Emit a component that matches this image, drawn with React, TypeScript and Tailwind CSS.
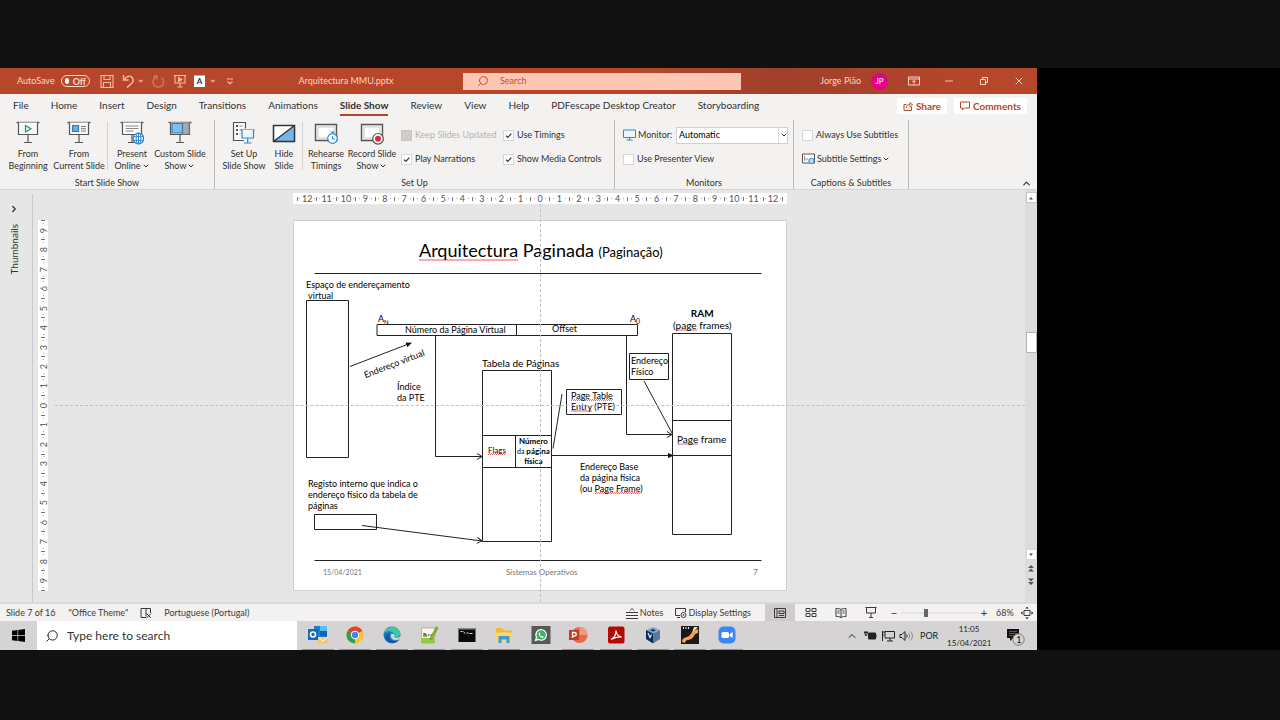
import type { ReactNode } from "react";
import { ChevronDown, ChevronRight, ChevronUp, Minus, Search, X } from "lucide-react";

/* ---------- shared pieces ---------- */

function Check({ label, checked = false, disabled = false }: { label: string; checked?: boolean; disabled?: boolean }) {
  return (
    <label className={`flex h-4 items-center gap-[3px] whitespace-nowrap ${disabled ? "text-[#b5b3b1]" : ""}`}>
      <span className="grid place-items-center">
        <input
          type="checkbox"
          defaultChecked={checked}
          disabled={disabled}
          className="peer col-start-1 row-start-1 size-[11px] appearance-none border border-[#d8d6d4] bg-white disabled:border-[#c8c6c4] disabled:bg-[#cfcdcb]"
        />
        <svg viewBox="0 0 10 10" className="pointer-events-none invisible col-start-1 row-start-1 size-[9px] peer-checked:visible">
          <path d="M2 5.2 4.2 7.2 8.2 2.8" fill="none" stroke="#333" strokeWidth="1.3" />
        </svg>
      </span>
      {label}
    </label>
  );
}

function BigButton({ icon, lines, menu = false, width }: { icon: ReactNode; lines: [string, string]; menu?: boolean; width: string }) {
  return (
    <button type="button" className={`flex shrink-0 flex-col items-center pt-px leading-3 whitespace-nowrap ${width}`}>
      <svg viewBox="0 0 24 24" className="mb-[3px] size-6" fill="none" stroke="#555" strokeWidth="1.2">
        {icon}
      </svg>
      <span>{lines[0]}</span>
      <span className="flex items-center">
        {lines[1]}
        {menu && <ChevronDown className="ml-px size-2" strokeWidth={3} />}
      </span>
    </button>
  );
}

function Group({ name, width, children }: { name: string; width: string; children: ReactNode }) {
  return (
    <section aria-label={name} className={`flex shrink-0 flex-col justify-between border-r border-[#bdbbb9] ${width}`}>
      <div className="flex">{children}</div>
      <h2 className="text-center leading-3">{name}</h2>
    </section>
  );
}

const Divider = () => <span className="mx-[2px] mt-0.5 h-12 w-px shrink-0 bg-[#d5d3d1]" />;

/* ---------- ribbon drawings ---------- */

const screen = (
  <>
    <path d="M0.5 1.5h23" strokeWidth="1.4" />
    <path d="M2.5 1.5v12h19v-12" fill="#fafafa" />
    <path d="M12 13.5v8M8 21.5h8" />
  </>
);

const icons = {
  begin: (
    <>
      {screen}
      <path d="M9.5 4.5v6.5l5.5-3.2z" stroke="#2c9465" fill="#e3f2eb" />
    </>
  ),
  current: (
    <>
      {screen}
      <path d="M5.500 4.500h6v6h-6z" fill="#66aee4" stroke="#2b7bbf" />
      <path d="M14 5.500h5M14 7.700h5M14 10h5" stroke="#777" strokeWidth="1" />
    </>
  ),
  online: (
    <>
      {screen}
      <path d="M5.500 5h13M5.500 7.500h13M5.500 10h8" stroke="#888" strokeWidth="1" />
      <circle cx="18.500" cy="17.500" r="5.300" fill="#fff" stroke="#2b88d0" />
      <ellipse cx="18.500" cy="17.500" rx="2.300" ry="5.300" stroke="#2b88d0" strokeWidth="1" />
      <path d="M13.500 15.700h10M13.500 19.300h10M18.500 12.200v10.600" stroke="#2b88d0" strokeWidth="1" />
    </>
  ),
  custom: (
    <>
      {screen}
      <path d="M14 2h7v11h-7z" fill="#aaa" stroke="#888" />
      <path d="M4 2.500h10.500v9.500H4z" fill="#83beec" stroke="#2b7bbf" />
    </>
  ),
  setup: (
    <>
      <path d="M12 19.500H1.500v-18h12v6" fill="#fafafa" />
      <path d="M4 5h2M4 9h2M4 13h2" strokeWidth="1.800" />
      <path d="M7.500 5h3.500M7.500 9h2M7.500 13h1" strokeWidth="1" stroke="#999" />
      <path d="M8.500 9h14" stroke="#2b88d0" />
      <path d="M10 9v8h11.500V9" fill="#eef6fc" stroke="#2b88d0" />
      <path d="M15.700 17v5M12 22h7.500" stroke="#2b88d0" />
    </>
  ),
  hide: (
    <>
      <path d="M1.500 4.500h21v16h-21z" fill="#fff" />
      <path d="M22.500 4.500v16h-21z" fill="#74b6e9" stroke="none" />
      <path d="M1.500 20.500 22.500 4.500M1.500 4.500h21v16h-21z" strokeWidth="1.400" stroke="#333" />
    </>
  ),
  rehearse: (
    <>
      <path d="M1.500 3.500h21v16h-21z" strokeWidth="1.400" />
      <path d="M4 6h16v11H4z" fill="#fff" stroke="#ccc" strokeWidth="1" />
      <circle cx="18.500" cy="17.500" r="4.800" fill="#fff" stroke="#2b88d0" />
      <path d="M16.500 11h4M18.500 11v2M18.500 15v3h2.500M22 12.500l1.200 1.200" stroke="#2b88d0" strokeWidth="1" />
    </>
  ),
  record: (
    <>
      <path d="M1.500 3.500h21v16h-21z" strokeWidth="1.400" />
      <path d="M4 6h16v11H4z" fill="#fff" stroke="#ccc" strokeWidth="1" />
      <circle cx="18" cy="17.800" r="5.300" fill="#fff" stroke="#555" />
      <circle cx="18" cy="17.800" r="3" fill="#e0283c" stroke="none" />
    </>
  ),
};

/* ---------- title bar ---------- */

function TitleBar() {
  return (
    <header className="flex h-[26px] shrink-0 items-center bg-linear-to-r from-[#b7472a] from-60% via-[#a0402a] via-75% to-[#b7472a] to-95% pr-3 pl-[17px] text-[9px] text-[#ffd3c4]">
      <div className="flex w-[230px] items-center">
        <span className="w-[39px]">AutoSave</span>
        <button type="button" className="ml-[5px] flex h-3 w-[29px] items-center gap-1 rounded-full border border-[#ffd3c4] px-[3px] leading-none font-bold">
          <span className="size-[6px] rounded-full bg-white" />
          Off
        </button>
        <svg viewBox="0 0 140 14" className="ml-[10px] h-[14px] w-[140px] shrink-0" fill="none" stroke="#ffb9a2" strokeWidth="1.100">
          <path d="M1 1.500h12v12H1zM4 1.500v4h6v-4M3.500 13.500v-5h7v5" />
          <path d="M23.500 1v5h5M24 6c2-4 6-5 8-2.500s1 5-1 6.500l-4 3.500" strokeWidth="1.400" />
          <path d="M39 6l1.800 1.800L42.600 6" />
          <path d="M61.500 3.500a5.300 5.300 0 1 1-5.500-.5M53.500 2h3.500v3.500" stroke="#d07a60" strokeWidth="1.400" />
          <path d="M74 1.500h12M75 1.500v7.500h10V1.500M80 9v4M77.500 13h5" />
          <path d="M78.500 3.500v4l3.500-2z" fill="#ffb9a2" />
          <path d="M94 1.500h11V13H94z" fill="#fff" stroke="none" />
          <path d="M111 6l1.800 1.800L114.600 6" />
          <path d="M127 5h6M127.500 7.500l2.500 2.200 2.500-2.200" />
          <text x="96.800" y="10.300" fontSize="8" fontWeight="bold" fill="#333" stroke="none">A</text>
        </svg>
      </div>
      <h1 className="w-[198px] text-center whitespace-nowrap">Arquitectura MMU.pptx</h1>
      <label className="ml-[18px] flex h-[17px] w-[278px] items-center gap-[11px] bg-[#ffc7b3] px-[14px] text-[#b7472a]">
        <Search className="size-3 -scale-x-100" strokeWidth={1.800} />
        <input aria-label="Search" placeholder="Search" className="w-40 outline-none placeholder:text-[#b5563c]" />
      </label>
      <div className="ml-auto flex items-center">
        <span>Jorge Pião</span>
        <span className="ml-[10px] grid size-[17px] place-items-center rounded-full bg-[#e3008c] text-[8px] text-white">JP</span>
        <button type="button" aria-label="Ribbon display options" className="ml-[20px]">
          <svg viewBox="0 0 12 12" className="size-3" fill="none" stroke="currentColor">
            <path d="M.5 2h11v8H.500zM.500 4h11M6 9V5.500M4.300 7 6 5.300 7.700 7" />
          </svg>
        </button>
        <button type="button" aria-label="Minimize" className="ml-[23px]"><Minus className="size-3" strokeWidth={1.800} /></button>
        <button type="button" aria-label="Restore" className="ml-[23px]">
          <svg viewBox="0 0 12 12" className="size-3" fill="none" stroke="currentColor">
            <path d="M2.500 4.500h5v5h-5zM4.500 4.500v-2h5v5h-2" />
          </svg>
        </button>
        <button type="button" aria-label="Close" className="ml-[23px]"><X className="size-3" strokeWidth={2} /></button>
      </div>
    </header>
  );
}

/* ---------- tabs ---------- */

const tabs = ["File", "Home", "Insert", "Design", "Transitions", "Animations", "Slide Show", "Review", "View", "Help", "PDFescape Desktop Creator", "Storyboarding"];

function Tabs() {
  return (
    <nav className="flex h-6 shrink-0 items-center justify-between pr-[10px] pl-[13px] text-[10px]">
      <div className="flex gap-[22px]">
        {tabs.map((t) => (
          <a
            key={t}
            href="#"
            className={`border-b-2 leading-[18px] whitespace-nowrap ${t === "Slide Show" ? "border-[#b7472a] font-bold" : "border-transparent"}`}
          >
            {t}
          </a>
        ))}
      </div>
      <div className="flex gap-[7px] font-bold text-[#b7472a]">
        <button type="button" className="flex h-4 items-center gap-[3px] bg-white px-[6px]">
          <svg viewBox="0 0 10 10" className="size-[10px]" fill="none" stroke="currentColor">
            <path d="M3.500 3.500H1v6h7.500V6M3 7c.3-2.500 2-3.500 4-3.500V1.500L9.500 4 7 6.200V4.500" />
          </svg>
          Share
        </button>
        <button type="button" className="flex h-4 items-center gap-[3px] bg-white px-[6px]">
          <svg viewBox="0 0 10 10" className="size-[10px]" fill="none" stroke="currentColor">
            <path d="M.500 1h9v6H4.500L2.500 9V7h-2z" />
          </svg>
          Comments
        </button>
      </div>
    </nav>
  );
}

/* ---------- ribbon ---------- */

function Ribbon() {
  return (
    <div className="flex h-[72px] shrink-0 border-b border-[#d6d4d2] pt-[2px] text-[9px]">
      <Group name="Start Slide Show" width="w-[215px]">
        <span className="w-[3px] shrink-0" />
        <BigButton icon={icons.begin} lines={["From", "Beginning"]} width="w-[50px]" />
        <BigButton icon={icons.current} lines={["From", "Current Slide"]} width="w-[52px]" />
        <Divider />
        <BigButton icon={icons.online} lines={["Present", "Online"]} menu width="w-[44px]" />
        <BigButton icon={icons.custom} lines={["Custom Slide", "Show"]} menu width="w-[52px]" />
      </Group>
      <Group name="Set Up" width="w-[400px]">
        <span className="w-[5px] shrink-0" />
        <BigButton icon={icons.setup} lines={["Set Up", "Slide Show"]} width="w-[48px]" />
        <BigButton icon={icons.hide} lines={["Hide", "Slide"]} width="w-[32px]" />
        <Divider />
        <BigButton icon={icons.rehearse} lines={["Rehearse", "Timings"]} width="w-[42px]" />
        <BigButton icon={icons.record} lines={["Record Slide", "Show"]} menu width="w-[50px]" />
        <div className="ml-1 flex w-[102px] shrink-0 flex-col gap-2 pt-[7px]">
          <Check label="Keep Slides Updated" disabled />
          <Check label="Play Narrations" checked />
        </div>
        <div className="flex flex-col gap-2 pt-[7px]">
          <Check label="Use Timings" checked />
          <Check label="Show Media Controls" checked />
        </div>
      </Group>
      <Group name="Monitors" width="w-[179px]">
        <div className="flex w-full flex-col gap-2 pt-[7px] pr-[5px] pl-2">
          <div className="flex h-4 items-center">
            <svg viewBox="0 0 13 12" className="mr-[2px] h-3 w-[13px]" fill="#eef6fc" stroke="#2b88d0">
              <path d="M.500 1h12v7.500H.500zM6.500 8.500V11M3.500 11h6" />
            </svg>
            <label htmlFor="monitor">Monitor:</label>
            <span className="ml-auto grid w-[112px] items-center">
              <select id="monitor" className="col-start-1 row-start-1 h-[17px] appearance-none border border-[#d2d0ce] bg-white pl-[2px] text-black">
                <option>Automatic</option>
              </select>
              <span className="pointer-events-none col-start-1 row-start-1 grid h-[15px] w-[10px] place-items-center justify-self-end border-l border-[#e0e0e0]">
                <ChevronDown className="size-2" strokeWidth={3} />
              </span>
            </span>
          </div>
          <Check label="Use Presenter View" />
        </div>
      </Group>
      <Group name="Captions & Subtitles" width="w-[115px]">
        <div className="flex flex-col gap-2 pt-[7px] pl-2">
          <Check label="Always Use Subtitles" />
          <button type="button" className="flex h-4 items-center whitespace-nowrap">
            <svg viewBox="0 0 13 12" className="mr-[2px] h-3 w-[13px]" fill="#fff" stroke="#555">
              <path d="M.500 1h12v9H.500z" />
              <path d="M2.500 3v5M2.500 6h4" stroke="#999" />
              <circle cx="9.500" cy="8" r="2.700" stroke="#2b88d0" fill="#b9dcf5" />
            </svg>
            Subtitle Settings
            <ChevronDown className="ml-px size-2" strokeWidth={3} />
          </button>
        </div>
      </Group>
      <button type="button" aria-label="Collapse the ribbon" className="mr-[5px] ml-auto self-end">
        <ChevronUp className="size-[11px]" strokeWidth={2.500} />
      </button>
    </div>
  );
}

/* ---------- rulers ---------- */

function scale(max: number) {
  return Array.from({ length: 2 * max + 1 }, (_, i) => Math.abs(i - max));
}

function HorizontalRuler() {
  return (
    <div className="flex h-[11px] w-[494px] items-center bg-white px-1 text-[9px] leading-none text-[#555]">
      <span className="h-1 w-px bg-[#777]" />
      {scale(12).map((n, i) => (
        <span key={i} className="flex flex-1 items-center justify-between">
          <span />
          <span className="size-px bg-[#aaa]" />
          <span>{n}</span>
          <span className="size-px bg-[#aaa]" />
          <span className="h-1 w-px bg-[#777]" />
        </span>
      ))}
    </div>
  );
}

function VerticalRuler() {
  return (
    <div className="flex h-[371px] w-[10px] flex-col items-center bg-white text-[9px] leading-none text-[#555]">
      <span className="h-px w-1 bg-[#777]" />
      {scale(9).map((n, i) => (
        <span key={i} className="flex flex-1 flex-col items-center justify-between">
          <span />
          <span className="size-px bg-[#aaa]" />
          <span className="grid size-[9px] -rotate-90 place-items-center">{n}</span>
          <span className="size-px bg-[#aaa]" />
          <span className="h-px w-1 bg-[#777]" />
        </span>
      ))}
    </div>
  );
}

/* ---------- slide ---------- */

const Typo = ({ children }: { children: ReactNode }) => (
  <span className="bg-[conic-gradient(#e8606a_25%,transparent_0_50%,#e8606a_0_75%,transparent_0)] bg-[length:2px_2px] bg-bottom bg-repeat-x">{children}</span>
);

function Label({ at, children }: { at: string; children: ReactNode }) {
  return <p className={`absolute whitespace-nowrap ${at}`}>{children}</p>;
}

function Slide() {
  return (
    <article className="relative h-[371px] w-[494px] shrink-0 border border-[#d0d0d0] bg-white text-[9px] leading-[11px] text-black">
      <svg viewBox="294 221 492 369" className="absolute inset-0 size-full" fill="none" stroke="#222" strokeWidth="1">
        <defs>
          <marker id="solid" markerWidth="6" markerHeight="6" refX="5" refY="3" orient="auto">
            <path d="M0 .500 6 3 0 5.500z" fill="#111" stroke="none" />
          </marker>
          <marker id="open" markerWidth="7" markerHeight="8" refX="6" refY="4" orient="auto">
            <path d="M1 1 6 4 1 7" fill="none" stroke="#222" />
          </marker>
        </defs>
        <path d="M314.500 273.500h447M314.500 560.500h447" strokeWidth="1.200" />
        <path d="M306.500 300.500h42v157h-42z" />
        <path d="M377 324.500h260.500v11H377zM516.500 324.500v11" />
        <path d="M350 366.500 411 343" markerEnd="url(#solid)" />
        <path d="M435.500 335.500v121H482" markerEnd="url(#open)" />
        <path d="M482.500 370.500h69v171h-69zM482.500 435.500h69M482.500 467.500h69M515.500 435.500v32" />
        <path d="M314.500 514.500h62v15h-62z" />
        <path d="M362 525.500 482 541" markerEnd="url(#open)" />
        <path d="M626.500 335.500v99H672" markerEnd="url(#open)" />
        <path d="M551.500 455.500H673" markerEnd="url(#solid)" />
        <path d="M553 448.500 562 394" />
        <path d="M566.500 389.500h55v25h-55zM629.500 353.500h39v26h-39z" />
        <path d="M644 381 672 433" />
        <path d="M672.500 333.500h59v201h-59zM672.500 420.500h59M672.500 455.500h59" />
      </svg>
      <h2 className="absolute top-[17px] left-[125px] text-[18px] leading-6 whitespace-nowrap">
        <Typo>Arquitectura</Typo> Paginada <span className="text-[13px]">(Paginação)</span>
      </h2>
      <Label at="top-[58px] left-3">Espaço de endereçamento<br />&nbsp;virtual</Label>
      <Label at="top-[92px] left-[84px]">A<sub className="text-[6px]">N</sub></Label>
      <Label at="top-[92px] left-[336px]">A<sub>0</sub></Label>
      <Label at="top-[103px] left-[111px]">Número da Página Virtual</Label>
      <Label at="top-[102px] left-[258px]">Offset</Label>
      <Label at="top-[137px] left-[68px] -rotate-[21deg]">Endereço virtual</Label>
      <Label at="top-[160px] left-[103px]">Índice<br />da PTE</Label>
      <Label at="top-[137px] left-[188px] text-[10px]">Tabela de Páginas</Label>
      <Label at="top-[134px] left-[337px]">Endereço<br />Físico</Label>
      <Label at="top-[169px] left-[277px]"><Typo>Page Table</Typo><br /><Typo>Entry</Typo> (PTE)</Label>
      <Label at="top-[86px] left-[379px] text-center text-[10px] leading-3"><b>RAM</b><br />(<Typo>page</Typo> frames)</Label>
      <Label at="top-[213px] left-[383px] text-[10px]"><Typo>Page</Typo> frame</Label>
      <Label at="top-[224px] left-[194px] text-[8px]"><Typo>Flags</Typo></Label>
      <Label at="top-[215px] left-[223px] text-center text-[8px] leading-[10px] font-bold">Número<br /><span className="text-[7px] font-normal">da</span> página<br />física</Label>
      <Label at="top-[240px] left-[286px]">Endereço Base<br />da página física<br />(ou <Typo>Page Frame</Typo>)</Label>
      <Label at="top-[257px] left-[14px]">Registo interno que indica o<br />endereço físico da tabela de<br />páginas</Label>
      <Label at="top-[346px] left-[29px] text-[7px] text-[#777]">15/04/2021</Label>
      <Label at="top-[346px] left-[212px] text-[8px] text-[#777]">Sistemas Operativos</Label>
      <Label at="top-[346px] left-[459px] text-[8px] text-[#777]">7</Label>
    </article>
  );
}

function Workspace() {
  return (
    <main className="flex flex-1 bg-[#e6e6e6]">
      <aside className="mt-1 flex w-[33px] shrink-0 flex-col items-center gap-[10px] border-r border-[#c9c9c9] pt-[10px] pr-1 text-[10px]">
        <ChevronRight className="size-[10px]" strokeWidth={3} />
        <span className="rotate-180 [writing-mode:vertical-rl]">Thumbnails</span>
      </aside>
      <div className="w-[22px] shrink-0 pt-[30px] pl-[5px]">
        <VerticalRuler />
      </div>
      <div className="relative flex flex-1 flex-col items-center pt-[3px] pb-[11px]">
        <HorizontalRuler />
        <div className="mt-4 flex">
          <Slide />
        </div>
        <span className="absolute top-[215px] right-0 left-0 border-t border-dashed border-[#c0c0c0]" />
        <span className="absolute top-[14px] bottom-0 left-1/2 border-l border-dashed border-[#c0c0c0]" />
      </div>
      <div className="flex w-3 shrink-0 flex-col items-center bg-[#dcdcdc] pt-[2px] pb-4 text-[#555]">
        <button type="button" aria-label="Scroll up" className="grid size-[11px] place-items-center border border-[#c6c6c6] bg-white">
          <svg viewBox="0 0 6 6" className="size-[6px]"><path d="M1 4.500h4L3 2z" fill="currentColor" /></svg>
        </button>
        <span className="mt-[129px] h-[21px] w-[11px] border border-[#b5b5b5] bg-white" />
        <button type="button" aria-label="Scroll down" className="mt-auto grid size-[11px] place-items-center border border-[#d6d6d6] bg-white">
          <svg viewBox="0 0 6 6" className="size-[6px]"><path d="M1 1.500h4L3 4z" fill="currentColor" /></svg>
        </button>
        <button type="button" aria-label="Previous slide" className="mt-1">
          <svg viewBox="0 0 6 8" className="h-2 w-[6px]"><path d="M0 4h6L3 1zM0 7.500h6L3 4.500z" fill="currentColor" /></svg>
        </button>
        <button type="button" aria-label="Next slide" className="mt-[6px]">
          <svg viewBox="0 0 6 8" className="h-2 w-[6px]"><path d="M0 .500h6L3 3.500zM0 4h6L3 7z" fill="currentColor" /></svg>
        </button>
      </div>
    </main>
  );
}

/* ---------- status bar ---------- */

function StatusBar() {
  return (
    <div className="flex h-[19px] shrink-0 items-center border-t-2 border-[#dadada] bg-[#f3f2f1] pl-[6px] text-[9px] text-[#3b3a39]">
      <span>Slide 7 of 16</span>
      <span className="ml-[13px]">"Office Theme"</span>
      <svg viewBox="0 0 12 12" className="ml-3 size-3" fill="none" stroke="currentColor">
        <path d="M6 1.500H1v9h5M6 1.500v8M6 1.500h4.500V6M6.500 6.500l4.500 4.500M11 6.500 6.500 11" />
      </svg>
      <span className="ml-3">Portuguese (Portugal)</span>
      <div className="ml-auto flex items-center">
        <button type="button" className="flex items-center gap-[2px]">
          <svg viewBox="0 0 12 12" className="size-3" fill="none" stroke="currentColor">
            <path d="M0 5.500h12M0 8.500h12M0 11.500h12M4 3.500l2-2 2 2" />
          </svg>
          Notes
        </button>
        <button type="button" className="ml-3 flex items-center gap-px">
          <svg viewBox="0 0 12 12" className="size-3" fill="none" stroke="currentColor">
            <path d="M5 8.500H.500v-7h10V5M2 10.500h3" />
            <circle cx="8.500" cy="8" r="2.500" />
            <circle cx="8.500" cy="8" r=".500" />
          </svg>
          Display Settings
        </button>
        <button type="button" aria-label="Normal" className="ml-[14px] grid h-[17px] w-[30px] place-items-center bg-[#cfcdcb]">
          <svg viewBox="0 0 12 10" className="h-[10px] w-3" fill="none" stroke="currentColor">
            <path d="M.500.500h11v9H.500zM3 .500v9M5 3h5v2.500H5zM5 7.500h5" />
          </svg>
        </button>
        <button type="button" aria-label="Slide sorter" className="grid w-[31px] place-items-center">
          <svg viewBox="0 0 12 10" className="h-[10px] w-3" fill="none" stroke="currentColor">
            <path d="M1 .500h4v3H1zM7 .500h4v3H7zM1 5.500h4v3H1zM7 5.500h4v3H7z" />
          </svg>
        </button>
        <button type="button" aria-label="Reading view" className="grid w-[30px] place-items-center">
          <svg viewBox="0 0 12 10" className="h-[10px] w-3" fill="none" stroke="currentColor">
            <path d="M6 1.500C4.500.500 3 .500 1 .500v8c2 0 3.500 0 5 1 1.500-1 3-1 5-1v-8c-2 0-3.500 0-5 1zM6 1.500v8M2.500 3h2M2.500 5h2M7.500 3h2M7.500 5h2" />
          </svg>
        </button>
        <button type="button" aria-label="Slide show" className="grid w-[30px] place-items-center">
          <svg viewBox="0 0 12 11" className="h-[11px] w-3" fill="none" stroke="currentColor">
            <path d="M.500.500h11M1.500.500v5.500h9V.500M6 6v4M4 10.500h4" />
          </svg>
        </button>
        <button type="button" aria-label="Zoom out" className="ml-1 w-2 text-[12px] leading-none">−</button>
        <input
          type="range"
          aria-label="Zoom"
          defaultValue={32}
          className="mx-[3px] h-3 w-[76px] appearance-none bg-linear-to-b from-transparent from-45% via-[#999] via-50% to-transparent to-55% [&::-webkit-slider-thumb]:h-2 [&::-webkit-slider-thumb]:w-1 [&::-webkit-slider-thumb]:appearance-none [&::-webkit-slider-thumb]:bg-[#666]"
        />
        <button type="button" aria-label="Zoom in" className="w-2 text-[12px] leading-none">+</button>
        <span className="ml-2 w-[25px]">68%</span>
        <button type="button" aria-label="Fit slide to window" className="mr-1">
          <svg viewBox="0 0 12 12" className="size-3" fill="none" stroke="currentColor">
            <path d="M3 3.500h6v5H3zM6 0v2M6 10v2M0 6h2M10 6h2M4.700 1.500 6 .300 7.300 1.500M4.700 10.500 6 11.700 7.300 10.500M1.500 4.700.300 6l1.200 1.300M10.500 4.700 11.700 6l-1.200 1.300" />
          </svg>
        </button>
      </div>
    </div>
  );
}

/* ---------- taskbar ---------- */

const apps: { name: string; open?: boolean; art: ReactNode }[] = [
  {
    name: "Outlook",
    open: true,
    art: (
      <>
        <path d="M6 1h13v13H6z" fill="#1a7fd4" />
        <path d="M12 1h7v5h-7z" fill="#4fc3f2" />
        <path d="M12 6h7v5h-7z" fill="#1461b0" />
        <path d="M0 4h10v11H0z" fill="#0f6cbd" />
        <circle cx="5" cy="9.500" r="2.500" fill="none" stroke="#fff" strokeWidth="1.500" />
        <path d="M10 12h10v7H10z" fill="#f5c97a" />
        <path d="m10 12 5 4 5-4" fill="none" stroke="#fff1d6" />
      </>
    ),
  },
  {
    name: "Chrome",
    open: true,
    art: (
      <>
        <circle cx="10" cy="10" r="8.500" fill="#f9c22e" />
        <path d="M10 10 2.640 5.750A8.500 8.500 0 0 1 17.360 5.750z" fill="#e04335" />
        <path d="M2.640 5.750 10 10 10 18.500A8.500 8.500 0 0 1 2.640 5.750z" fill="#2f9e4f" />
        <circle cx="10" cy="10" r="4.200" fill="#fff" />
        <circle cx="10" cy="10" r="3.200" fill="#4285f4" />
      </>
    ),
  },
  {
    name: "Edge",
    open: true,
    art: (
      <>
        <circle cx="10" cy="10" r="8.500" fill="#1b76c9" />
        <path d="M2 8C4 1 15-.500 18 7c1 4-2 6-6 5 2-4-4-8-10-4z" fill="#3fc8a8" />
        <path d="M8 9c-2 4 1 9 9 6-3 4-10 4-13 0-2-4 1-7 4-6z" fill="#155a9e" />
        <path d="M9 9c3-1 4 1 3 3 2 1 5 1 6.500-1 0 3-3 5-6.500 4-3-1-4-4-3-6z" fill="#d5d3d1" />
      </>
    ),
  },
  {
    name: "Notepad++",
    open: true,
    art: (
      <>
        <path d="M2.500 3h13v15h-13z" fill="#f7f7e8" stroke="#999" strokeWidth=".600" />
        <path d="M2.500 13h13v5h-13z" fill="#8ccf3c" />
        <path d="M5 8v4M5 9h2v3M8.500 10h2M11.500 10h2" stroke="#333" fill="none" />
        <path d="M17.500 1.500 11.500 12l-.300 3 2.500-1.500L19 3z" fill="#8ab82c" stroke="#66751f" strokeWidth=".500" />
      </>
    ),
  },
  {
    name: "Command Prompt",
    open: true,
    art: (
      <>
        <path d="M1.500 3h17v14h-17z" fill="#0a0a0a" />
        <path d="M1.500 3h17v1.500h-17z" fill="#888" />
        <path d="M3.500 6.500h2M6.500 6.500l1.500 2M9.500 8h2M12.500 8.500h3" stroke="#ddd" />
      </>
    ),
  },
  {
    name: "File Explorer",
    open: true,
    art: (
      <>
        <path d="M2 3h6l2 2.500h8V17H2z" fill="#f0b93a" />
        <path d="M2 7.500h16V17H2z" fill="#fbd872" />
        <path d="M4.500 11h11v7h-3v-3.500h-5V18h-3z" fill="#3d9bdc" />
      </>
    ),
  },
  {
    name: "WhatsApp",
    art: (
      <>
        <path d="M.500 1h19v18H.500z" fill="#585858" />
        <path d="M4.500 15.500 5.500 12.500a5.300 5.300 0 1 1 2 2z" fill="#35b565" stroke="#fff" strokeWidth="1.200" />
        <path d="M7.500 8.500c.500 2.500 2 4 4.500 4.500l.800-1.300-1.500-.900-.800.700c-.800-.500-1.200-1-1.600-1.700l.700-.800-.700-1.500z" fill="#fff" />
      </>
    ),
  },
  {
    name: "PowerPoint",
    open: true,
    art: (
      <>
        <circle cx="11.500" cy="10" r="8" fill="#e2694a" />
        <path d="M11.500 2a8 8 0 0 1 8 8h-8z" fill="#f4997e" />
        <path d="M1 5h10v10H1z" fill="#c33e1f" />
        <path d="M4.500 13V7.500h2a1.700 1.700 0 0 1 0 3.500h-2" fill="none" stroke="#fff" strokeWidth="1.300" />
      </>
    ),
  },
  {
    name: "Acrobat Reader",
    open: true,
    art: (
      <>
        <rect x="2" y="1.500" width="16.500" height="17" rx="2" fill="#b30b00" />
        <path d="M5 14.500c3-1.500 5-5.500 5-9 .500 4 2 6 5.500 6.500-3.500-.500-7 .500-10.500 2.500z" fill="none" stroke="#fff" strokeWidth="1.300" />
      </>
    ),
  },
  {
    name: "VirtualBox",
    open: true,
    art: (
      <>
        <path d="m3 5 7-3 7 3-7 3.500z" fill="#89a9cc" />
        <path d="M3 5v9l7 4.500V8.500z" fill="#0d2c57" />
        <path d="M17 5v9l-7 4.500V8.500z" fill="#5579a3" />
        <path d="m5 8 2 4.500 1.500-3" fill="none" stroke="#e4eef8" strokeWidth="1.200" />
        <path d="m10 4 3 1.200-3 1.300-3-1.300z" fill="#12386a" />
      </>
    ),
  },
  {
    name: "PuTTY",
    open: true,
    art: (
      <>
        <path d="M1 1h18v18H1z" fill="#1c1a18" />
        <path d="M3 3h1M5.500 3h1M8 3h1" stroke="#eee" strokeWidth="2" />
        <path d="M2 17c0-5 4-4 7-6s2-5 9-7v4c-5 1-3 4-7 6s-5 0-6 4z" fill="#f5a54a" />
        <path d="M14 2h4l-6 6z" fill="#fbe0b0" />
      </>
    ),
  },
  {
    name: "Zoom",
    open: true,
    art: (
      <>
        <rect x="1.500" y="1.500" width="17" height="17" rx="5" fill="#3d86f7" />
        <rect x="4.500" y="7" width="7.500" height="6" rx="1.500" fill="#fff" />
        <path d="m12.700 9 3-2v6l-3-2z" fill="#fff" />
      </>
    ),
  },
];

function Taskbar() {
  return (
    <footer className="flex h-[29px] shrink-0 items-stretch bg-[#d5d3d3] text-[#222]">
      <button type="button" aria-label="Start" className="grid w-[37px] place-items-center">
        <svg viewBox="0 0 13 13" className="size-[13px]">
          <path d="M0 1.800 5.500 1v5.200H0zM6.200.900 13 0v6.200H6.200zM0 6.900h5.500V12L0 11.200zM6.200 6.900H13V13l-6.800-.900z" />
        </svg>
      </button>
      <label className="flex w-[260px] items-center gap-2 bg-white pl-2">
        <Search className="size-[14px] -scale-x-100" strokeWidth={1.700} />
        <input aria-label="Type here to search" placeholder="Type here to search" className="w-40 text-[12px] outline-none placeholder:text-[#333]" />
      </label>
      <div className="ml-[2px] flex w-[447px]">
        {apps.map((a) => (
          <button key={a.name} type="button" aria-label={a.name} className="flex flex-1 flex-col items-center justify-between pt-1">
            <svg viewBox="0 0 20 20" className="size-5">{a.art}</svg>
            {a.open && <span className="h-px w-8 bg-[#8b95a0]" />}
          </button>
        ))}
      </div>
      <div className="ml-auto flex items-center text-[9px]">
        <ChevronUp className="size-3" strokeWidth={2} />
        <svg viewBox="0 0 52 12" className="ml-[6px] h-3 w-[52px]" fill="none" stroke="currentColor">
          <path d="M4.500 3h7v6h-7zM12 4.500v3" fill="#222" />
          <path d="M0 2.500h4M1 1v3l1 2 1-2V1" />
          <path d="M21 1.500h9.500v6.500H21zM26 8v3M23 11h6M18.500 1v10M18 2h3M18 5h2" />
          <path d="M36 4.500h2L41 1.500v9L38 7.500h-2z" />
          <path d="M42.500 4.500c.800 1 .800 2 0 3" />
          <path d="M44.500 3c1.500 2 1.500 4 0 6M46.500 1.500c2.500 3 2.500 6 0 9" stroke="#888" />
        </svg>
        <span className="ml-1 w-[18px]">POR</span>
        <p className="mx-[9px] w-[44px] text-center text-[8px] leading-[14px] whitespace-nowrap"><span className="block">11:05</span>15/04/2021</p>
        <svg viewBox="0 0 20 20" className="mr-3 ml-[5px] size-5">
          <path d="M2 3h12v9H8l-3 3v-3H2z" fill="#111" />
          <path d="M4 5.500h8M4 7.500h8M4 9.500h8" stroke="#888" strokeWidth=".600" />
          <circle cx="13.500" cy="13.500" r="5.700" fill="#d5d3d3" stroke="#777" />
          <text x="11.200" y="17" fontSize="9" fill="#111">1</text>
        </svg>
      </div>
    </footer>
  );
}

export default function App() {
  return (
    <div className="flex min-h-screen flex-col bg-[#111] pt-[68px] pb-[70px] text-[#323130] [font-family:Lato,'Open_Sans',sans-serif]">
      <div className="flex flex-1 bg-black pr-[243px]">
        <div className="flex min-w-0 flex-1 flex-col bg-[#f3f2f1]">
          <TitleBar />
          <Tabs />
          <Ribbon />
          <Workspace />
          <StatusBar />
          <Taskbar />
        </div>
      </div>
    </div>
  );
}
